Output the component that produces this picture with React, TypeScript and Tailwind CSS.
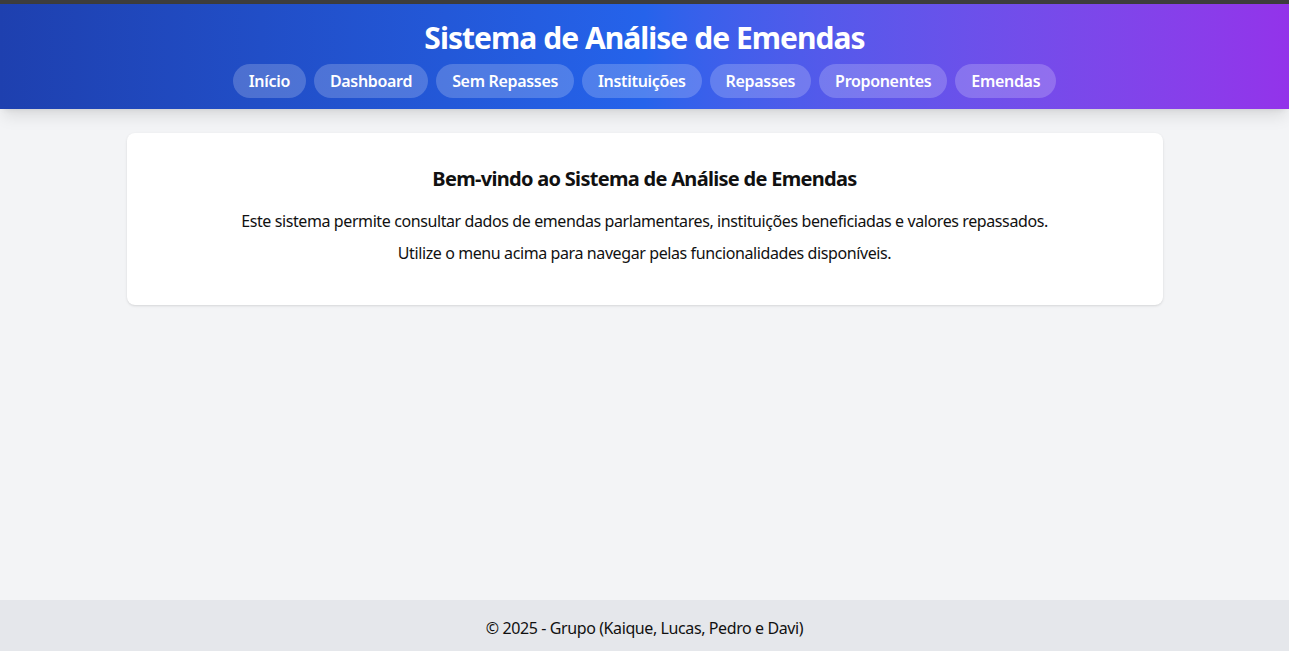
const links = ["Início", "Dashboard", "Sem Repasses", "Instituições", "Repasses", "Proponentes", "Emendas"];

export default function App() {
  return (
    <div className="min-h-screen flex flex-col bg-[#f3f4f6] text-[#111] font-['Noto_Sans',sans-serif] tracking-[-0.025em]">
      <div className="h-[4px] bg-[#3d3d3d]" />
      <header className="bg-gradient-to-r from-[#1e40af] via-[#2563eb] to-[#9333ea] text-white pt-[16px] pb-[11px] shadow-lg">
        <h1 className="text-center text-[30px] leading-[36px] font-bold tracking-[-0.032em]">Sistema de Análise de Emendas</h1>
        <nav className="mt-[8px] flex justify-center gap-2">
          {links.map((l) => (
            <a key={l} href="#" className="h-[34px] px-4 flex items-center rounded-full bg-white/20 text-[16px] font-semibold tracking-[-0.02em]">
              {l}
            </a>
          ))}
        </nav>
      </header>

      <main className="flex-1 pt-6">
        <div className="w-[1036px] mx-auto bg-white rounded-lg shadow p-8 text-center">
          <h2 className="text-[20px] leading-[28px] font-bold mb-4 tracking-[-0.035em]">Bem-vindo ao Sistema de Análise de Emendas</h2>
          <p className="mb-2">Este sistema permite consultar dados de emendas parlamentares, instituições beneficiadas e valores repassados.</p>
          <p className="mb-2">Utilize o menu acima para navegar pelas funcionalidades disponíveis.</p>
        </div>
      </main>

      <footer className="h-[51px] pt-[4px] bg-[#e5e7eb] flex items-center justify-center text-[16px]">
        © 2025 - Grupo (Kaique, Lucas, Pedro e Davi)
      </footer>
    </div>
  );
}
